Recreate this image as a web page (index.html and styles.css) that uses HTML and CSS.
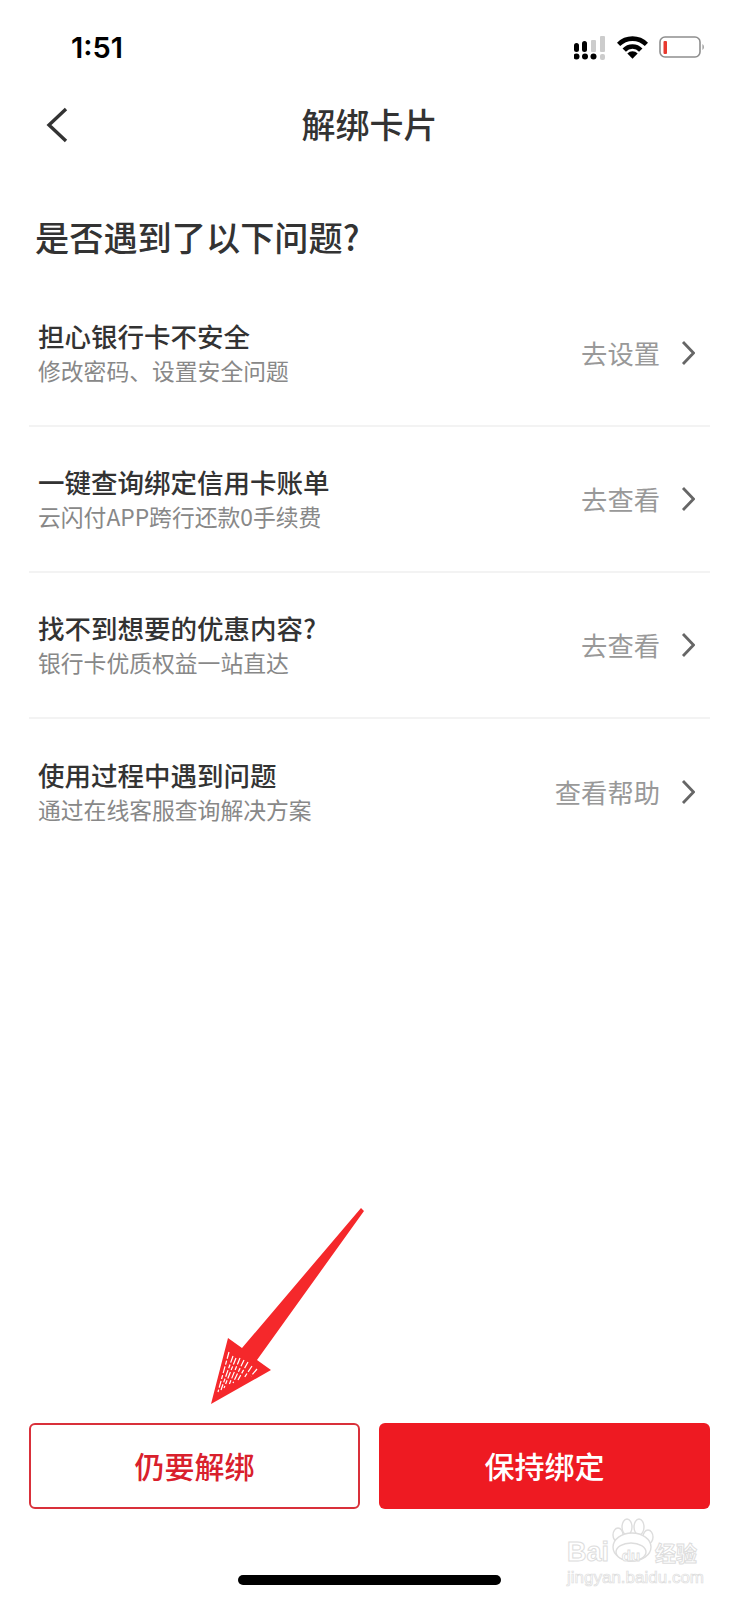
FILE: index.html
```html
<!DOCTYPE html>
<html lang="zh-CN">
<head>
<meta charset="UTF-8">
<meta name="viewport" content="width=device-width, initial-scale=1.0">
<title>解绑卡片</title>
<link rel="stylesheet" href="styles.css">
</head>
<body>
<div class="page">

  <div class="status-bar">
    <span class="clock">1:51</span>
    <div class="status-icons">
      <svg class="signal" width="32" height="24" viewBox="0 0 32 24">
        <rect x="0" y="7" width="5" height="9" rx="2.5" fill="#000"/>
        <rect x="8" y="5" width="5" height="11" rx="2.5" fill="#000"/>
        <rect x="17" y="4" width="5" height="12" rx="1" fill="#ccc"/>
        <rect x="26" y="0" width="5" height="16" rx="1" fill="#ccc"/>
        <circle cx="2.5" cy="20.5" r="3" fill="#000"/>
        <circle cx="11" cy="20.5" r="3" fill="#000"/>
        <circle cx="19.500" cy="20.5" r="3" fill="#000"/>
        <rect x="26" y="18" width="5" height="6" rx="2" fill="#ccc"/>
      </svg>
      <svg class="wifi" width="31" height="23" viewBox="0 0 30 22">
        <path d="M1.500 8 A19 19 0 0 1 28.500 8" fill="none" stroke="#000" stroke-width="4.500"/>
        <path d="M7 13.500 A11 11 0 0 1 23 13.500" fill="none" stroke="#000" stroke-width="4.500"/>
        <path d="M15 22 L10 16.800 A7 7 0 0 1 20 16.800 Z" fill="#000"/>
      </svg>
      <svg class="battery" width="46" height="22" viewBox="0 0 46 22">
        <rect x="1" y="1" width="40" height="20" rx="5" fill="#fff" stroke="#8e8e8e" stroke-width="1.600"/>
        <rect x="4.500" y="5" width="3.500" height="13" rx="1" fill="#e8392f"/>
        <path d="M43.500 8 A4 4 0 0 1 43.500 14 Z" fill="#8e8e8e"/>
      </svg>
    </div>
  </div>

  <div class="nav-bar">
    <svg class="back" width="24" height="36" viewBox="0 0 24 36">
      <path d="M21 2 L4 18 L21 34" fill="none" stroke="#333" stroke-width="3.400"/>
    </svg>
    <h1 class="nav-title">解绑卡片</h1>
  </div>

  <h2 class="question">是否遇到了以下问题?</h2>

  <div class="list">
    <div class="item">
      <div class="item-text">
        <div class="item-title">担心银行卡不安全</div>
        <div class="item-sub">修改密码、设置安全问题</div>
      </div>
      <span class="item-link">去设置</span>
      <svg class="chevron" width="14" height="24" viewBox="0 0 14 24"><path d="M2 1 L12.500 12 L2 23" fill="none" stroke="#666" stroke-width="2.800"/></svg>
    </div>
    <div class="item">
      <div class="item-text">
        <div class="item-title">一键查询绑定信用卡账单</div>
        <div class="item-sub">云闪付APP跨行还款0手续费</div>
      </div>
      <span class="item-link">去查看</span>
      <svg class="chevron" width="14" height="24" viewBox="0 0 14 24"><path d="M2 1 L12.500 12 L2 23" fill="none" stroke="#666" stroke-width="2.800"/></svg>
    </div>
    <div class="item">
      <div class="item-text">
        <div class="item-title">找不到想要的优惠内容?</div>
        <div class="item-sub">银行卡优质权益一站直达</div>
      </div>
      <span class="item-link">去查看</span>
      <svg class="chevron" width="14" height="24" viewBox="0 0 14 24"><path d="M2 1 L12.500 12 L2 23" fill="none" stroke="#666" stroke-width="2.800"/></svg>
    </div>
    <div class="item">
      <div class="item-text">
        <div class="item-title">使用过程中遇到问题</div>
        <div class="item-sub">通过在线客服查询解决方案</div>
      </div>
      <span class="item-link">查看帮助</span>
      <svg class="chevron" width="14" height="24" viewBox="0 0 14 24"><path d="M2 1 L12.500 12 L2 23" fill="none" stroke="#666" stroke-width="2.800"/></svg>
    </div>
  </div>

  <div class="actions">
    <button class="btn btn-outline">仍要解绑</button>
    <button class="btn btn-solid">保持绑定</button>
  </div>

  <div class="home-row"><div class="home-bar"></div></div>

  <!-- annotation drawn on top of the screenshot -->
  <svg class="arrow" width="170" height="200" viewBox="205 1205 170 200">
    <path d="M361 1208 L364 1211 L257 1360 L271 1370 L211 1404 L228 1338 L242 1348 Z" fill="#f5282b"/>
    <g stroke="#fff" stroke-width="1.200" fill="none" stroke-dasharray="7 2 4 2">
      <path d="M229 1352 L218 1392"/>
      <path d="M233 1356 L221 1390"/>
      <path d="M236 1358 L224 1388"/>
      <path d="M240 1358 L229 1385"/>
      <path d="M244 1360 L233 1383"/>
      <path d="M248 1362 L238 1380"/>
      <path d="M252 1366 L244 1378"/>
      <path d="M257 1369 L251 1376"/>
    </g>
  </svg>

  <div class="watermark">
    <svg class="paw" width="48" height="46" viewBox="0 0 48 46">
      <g fill="#fff" stroke="#ddd" stroke-width="1.400">
        <ellipse cx="7" cy="17" rx="5" ry="7"/>
        <ellipse cx="16" cy="9" rx="5" ry="8"/>
        <ellipse cx="28" cy="9" rx="5" ry="8"/>
        <ellipse cx="37" cy="19" rx="5" ry="7"/>
        <ellipse cx="21" cy="29" rx="19" ry="14"/>
        <ellipse cx="20" cy="34" rx="15" ry="9"/>
      </g>
    </svg>
    <div class="wm-top"><span class="wm-bai">Bai</span><span class="wm-du">du</span><span class="wm-cn">经验</span></div>
    <div class="wm-url">jingyan.baidu.com</div>
  </div>
</div>
</body>
</html>
```

FILE: styles.css
```css
* {
  box-sizing: border-box;
}
body {
  margin: 0;
  background: #fff;
  font-family: "Noto Sans CJK SC", "Liberation Sans", sans-serif;
  color: #333;
}
.page {
  position: relative;
  width: 739px;
  height: 1600px;
  display: flex;
  flex-direction: column;
  overflow: hidden;
  padding: 0 29px;
}

/* status bar */
.status-bar {
  height: 96px;
  margin: 0 -29px;
  display: flex;
  justify-content: space-between;
  align-items: flex-start;
  padding: 31px 34px 0 71px;
}
.clock {
  font-family: Inter, "Liberation Sans", sans-serif;
  font-size: 29px;
  line-height: 34px;
  font-weight: 600;
  color: #000;
}
.status-icons {
  display: flex;
  align-items: flex-start;
  gap: 11px;
  padding-top: 5px;
}

/* nav */
.nav-bar {
  position: relative;
  height: 60px;
  display: flex;
  align-items: center;
  justify-content: center;
}
.back {
  position: absolute;
  left: 16px;
  top: 11px;
}
.nav-title {
  margin: -5px 0 0;
  font-size: 34px;
  line-height: 44px;
  font-weight: 500;
}

.question {
  margin: 58px 0 23px 6px;
  font-size: 34.200px;
  line-height: 44px;
  font-weight: 500;
}

/* list */
.item {
  height: 146px;
  display: flex;
  align-items: center;
  padding: 0 15px 0 9px;
  border-bottom: 2px solid #f3f3f3;
}
.item:last-child {
  border-bottom: none;
}
.item-text {
  flex: 1;
  margin-top: -2px;
}
.item-title {
  font-size: 26.500px;
  line-height: 36px;
  font-weight: 500;
}
.item-sub {
  margin-top: 2px;
  font-size: 22.800px;
  line-height: 30px;
  color: #888;
}
.item-link {
  font-size: 26.300px;
  line-height: 36px;
  color: #999;
  margin-top: -1px;
}
.chevron {
  margin-left: 21px;
}

/* bottom buttons */
.actions {
  margin-top: auto;
  display: grid;
  grid-template-columns: 1fr 1fr;
  gap: 19px;
}
.btn {
  height: 86px;
  padding: 0 0 3px;
  border-radius: 6px;
  font-family: inherit;
  font-size: 30px;
  font-weight: 500;
}
.btn-outline {
  background: #fff;
  border: 2px solid #d9303a;
  color: #d9202c;
}
.btn-solid {
  background: #ee1a22;
  border: none;
  color: #fff;
}
.home-row {
  height: 91px;
  display: flex;
  justify-content: center;
  padding-top: 66px;
}
.home-bar {
  width: 263px;
  height: 10px;
  border-radius: 5px;
  background: #000;
}

/* overlays */
.arrow {
  position: absolute;
  left: 205px;
  top: 1205px;
}
.watermark {
  position: absolute;
  left: 567px;
  top: 1518px;
  width: 134px;
  height: 70px;
}
.paw {
  position: absolute;
  left: 44px;
  top: 0;
}
.wm-top {
  position: absolute;
  left: 0;
  top: 20px;
  display: flex;
  align-items: center;
  height: 28px;
}
.wm-bai {
  font-family: "Liberation Sans", sans-serif;
  font-size: 27px;
  line-height: 28px;
  font-weight: 700;
  color: #fff;
  -webkit-text-stroke: 1px #ddd;
  width: 44px;
}
.wm-du {
  font-family: "Liberation Sans", sans-serif;
  font-size: 15px;
  line-height: 20px;
  font-weight: 700;
  color: #fff;
  -webkit-text-stroke: 0.8px #ddd;
  width: 44px;
  padding: 8px 4px 0 0;
  text-align: center;
}
.wm-cn {
  font-size: 21px;
  line-height: 28px;
  font-weight: 700;
  color: #fff;
  -webkit-text-stroke: 1px #ddd;
  white-space: nowrap;
}
.wm-url {
  position: absolute;
  left: 0;
  top: 50px;
  font-family: "Liberation Sans", sans-serif;
  font-size: 17px;
  line-height: 20px;
  color: #fff;
  -webkit-text-stroke: 0.7px #ddd;
  white-space: nowrap;
}
```
